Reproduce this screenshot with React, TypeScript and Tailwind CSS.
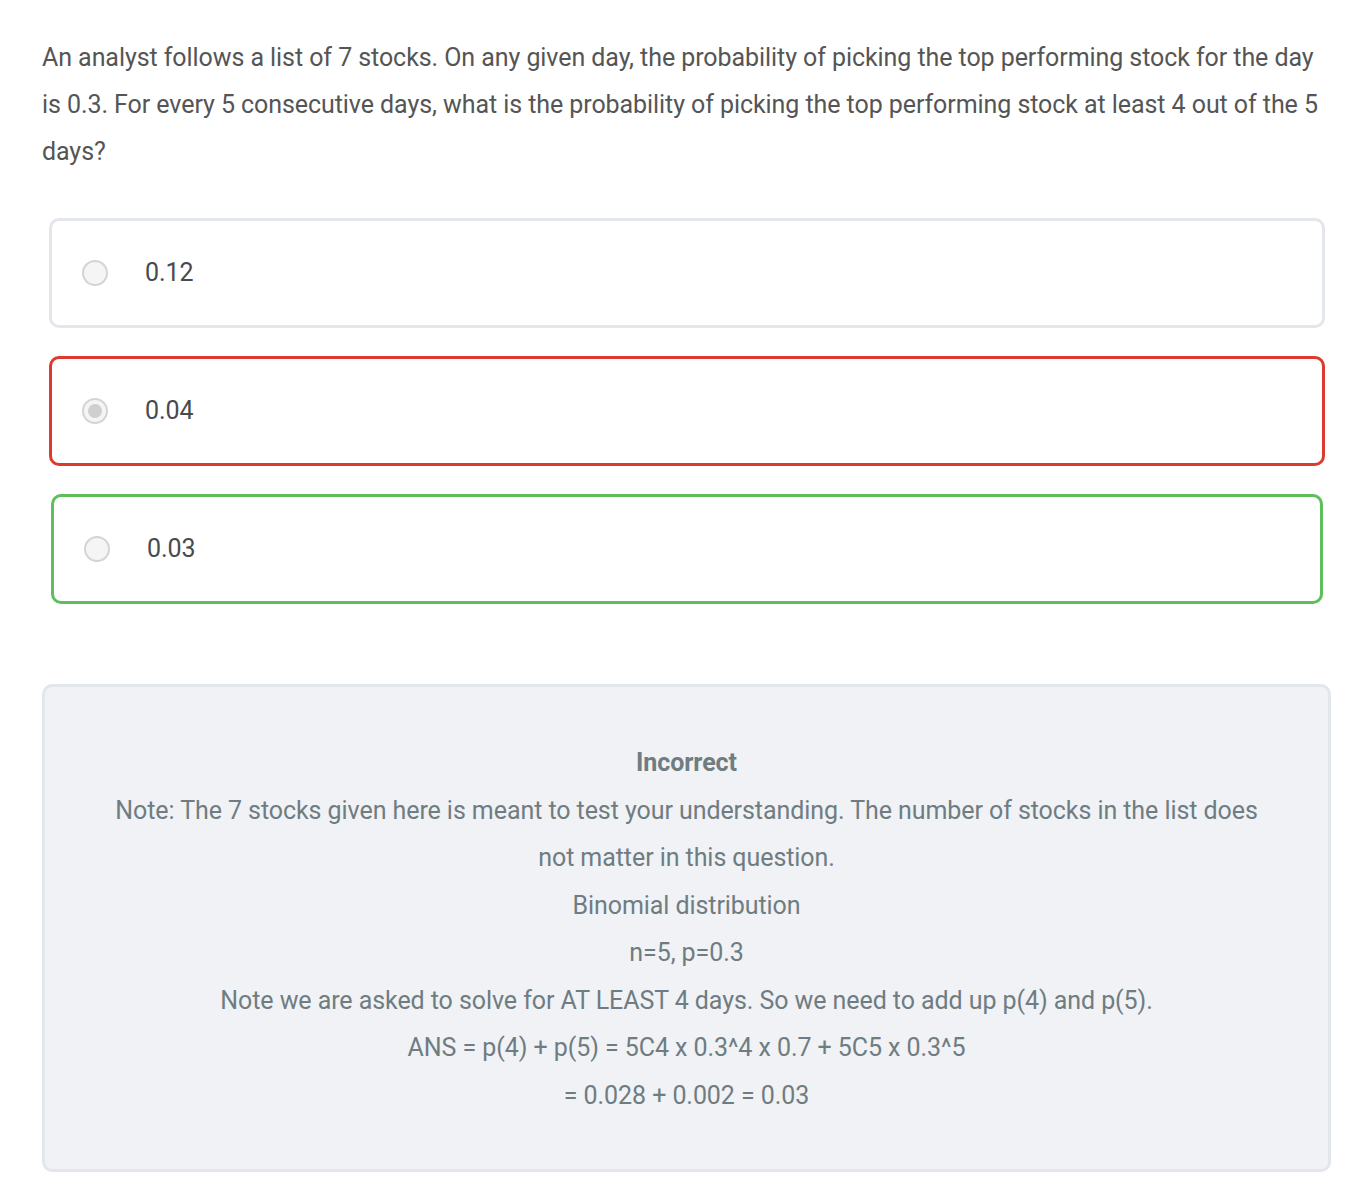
import React from "react";

function Radio({ checked }: { checked?: boolean }) {
  return (
    <span className="flex h-[26px] w-[26px] shrink-0 items-center justify-center rounded-full border-2 border-[#d4d4d4] bg-[#f5f5f5]">
      {checked && <span className="h-[14px] w-[14px] rounded-full bg-[#cfcfcf]" />}
    </span>
  );
}

function Option({ label, border, checked }: { label: string; border: string; checked?: boolean }) {
  return (
    <div className={`flex h-[110px] items-center rounded-[10px] border-[3px] bg-white pl-[30px] ${border}`}>
      <Radio checked={checked} />
      <span className="ml-[37px] text-[25px] text-[#4a4a4a]">{label}</span>
    </div>
  );
}

export default function App() {
  return (
    <div className="min-h-[1192px] w-[1360px] bg-white px-[42px] pt-[34px] font-['Roboto',sans-serif] tracking-[-0.07px]">
      <p className="text-[25px] leading-[47px] text-[#555555]">
        An analyst follows a list of 7 stocks. On any given day, the probability of picking the top performing stock for the day is 0.3. For every 5 consecutive days, what is the probability of picking the top performing stock at least 4 out of the 5 days?
      </p>
      <div className="mt-[43px] flex flex-col gap-[28px] pl-[7px]">
        <div className="mr-[-7px]">
          <Option label="0.12" border="border-[#e3e6eb]" />
        </div>
        <div className="mr-[-7px]">
          <Option label="0.04" border="border-[#dd3a2f]" checked />
        </div>
        <div className="ml-[2px] mr-[-5px]">
          <Option label="0.03" border="border-[#5cbf5b]" />
        </div>
      </div>
      <div className="mt-[80px] mr-[-13px] rounded-[10px] border-[3px] border-[#e3e6ea] bg-[#f0f2f5] px-[66px] pb-[50px] pt-[52px] text-center text-[25px] leading-[47.5px] text-[#6f7c82]">
        <div className="font-bold">Incorrect</div>
        <div>Note: The 7 stocks given here is meant to test your understanding. The number of stocks in the list does not matter in this question.</div>
        <div>Binomial distribution</div>
        <div>n=5, p=0.3</div>
        <div>Note we are asked to solve for AT LEAST 4 days. So we need to add up p(4) and p(5).</div>
        <div>ANS = p(4) + p(5) = 5C4 x 0.3^4 x 0.7 + 5C5 x 0.3^5</div>
        <div>= 0.028 + 0.002 = 0.03</div>
      </div>
    </div>
  );
}
